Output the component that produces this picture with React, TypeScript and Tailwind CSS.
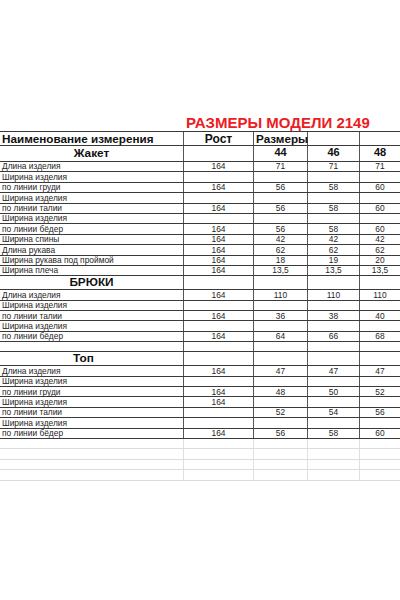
import React from "react";

type R = [string, string, string, string, string];

const jacket: R[] = [
  ["Длина изделия", "164", "71", "71", "71"],
  ["Ширина изделия", "", "", "", ""],
  ["по линии груди", "164", "56", "58", "60"],
  ["Ширина изделия", "", "", "", ""],
  ["по линии талии", "164", "56", "58", "60"],
  ["Ширина изделия", "", "", "", ""],
  ["по линии бёдер", "164", "56", "58", "60"],
  ["Ширина спины", "164", "42", "42", "42"],
  ["Длина рукава", "164", "62", "62", "62"],
  ["Ширина рукава под проймой", "164", "18", "19", "20"],
  ["Ширина плеча", "164", "13,5", "13,5", "13,5"],
];

const pants: R[] = [
  ["Длина изделия", "164", "110", "110", "110"],
  ["Ширина изделия", "", "", "", ""],
  ["по линии талии", "164", "36", "38", "40"],
  ["Ширина изделия", "", "", "", ""],
  ["по линии бёдер", "164", "64", "66", "68"],
];

const top: R[] = [
  ["Длина изделия", "164", "47", "47", "47"],
  ["Ширина изделия", "", "", "", ""],
  ["по линии груди", "164", "48", "50", "52"],
  ["Ширина изделия", "164", "", "", ""],
  ["по линии талии", "", "52", "54", "56"],
  ["Ширина изделия", "", "", "", ""],
  ["по линии бёдер", "164", "56", "58", "60"],
];

const cols = "grid grid-cols-[184px_70px_54px_52px_40px]";

function DataRow({ r }: { r: R }) {
  return (
    <div className={`${cols} h-[10.4px] border-b border-[#3a3a3a] text-[8.4px] leading-none text-[#1e1e1e]`}>
      <div className="flex items-center pl-[2px] border-r border-[#555] whitespace-nowrap">{r[0]}</div>
      <div className="flex items-center justify-center border-r border-[#555]">{r[1]}</div>
      <div className="flex items-center justify-center border-r border-[#555]">{r[2]}</div>
      <div className="flex items-center justify-center border-r border-[#555]">{r[3]}</div>
      <div className="flex items-center justify-center">{r[4]}</div>
    </div>
  );
}

function SectionRow({ title, h, sizes, shift }: { title: string; h: string; sizes?: boolean; shift?: boolean }) {
  return (
    <div className={`${cols} ${h} border-b border-[#3a3a3a] font-bold text-[#111] leading-none`}>
      <div className={`flex items-center justify-center border-r border-[#555] text-[11.8px] ${shift ? "pr-[16px]" : ""}`}>{title}</div>
      <div className="border-r border-[#555]"></div>
      <div className="flex items-end justify-center pb-[3px] border-r border-[#555] text-[11px]">{sizes ? "44" : ""}</div>
      <div className="flex items-end justify-center pb-[3px] border-r border-[#555] text-[11px]">{sizes ? "46" : ""}</div>
      <div className="flex items-end justify-center pb-[3px] text-[11px]">{sizes ? "48" : ""}</div>
    </div>
  );
}

function BlankRow({ h }: { h: string }) {
  return (
    <div className={`${cols} ${h} border-b border-[#3a3a3a]`}>
      <div className="border-r border-[#555]"></div>
      <div className="border-r border-[#555]"></div>
      <div className="border-r border-[#555]"></div>
      <div className="border-r border-[#555]"></div>
      <div></div>
    </div>
  );
}

function FaintRow() {
  return (
    <div className={`${cols} h-[10.4px] border-b border-[#dcdcdc]`}>
      <div className="border-r border-[#e0e0e0]"></div>
      <div className="border-r border-[#e0e0e0]"></div>
      <div className="border-r border-[#e0e0e0]"></div>
      <div className="border-r border-[#e0e0e0]"></div>
      <div></div>
    </div>
  );
}

export default function App() {
  return (
    <div className="w-[400px] h-[600px] bg-white overflow-hidden font-['Liberation_Sans',Arial,sans-serif]">
      <div className="pt-[113px]">
        <div className="h-[18px] pl-[186px] flex items-center text-[15px] font-bold text-[#ec1c24] leading-none whitespace-nowrap">
          РАЗМЕРЫ МОДЕЛИ 2149
        </div>
        <div className="border-t border-[#3a3a3a]">
          <div className={`${cols} h-[14px] border-b border-[#3a3a3a] font-bold text-[#111] leading-none`}>
            <div className="flex items-center pl-[2px] border-r border-[#555] text-[11.7px] whitespace-nowrap">Наименование измерения</div>
            <div className="flex items-center justify-center border-r border-[#555] text-[12px]">Рост</div>
            <div className="flex items-center pl-[2px] border-r border-[#555] text-[11.7px] whitespace-nowrap">Размеры</div>
            <div className="border-r border-[#555]"></div>
            <div></div>
          </div>
          <SectionRow title="Жакет" h="h-[16px]" sizes />
          {jacket.map((r, i) => (
            <DataRow key={"j" + i} r={r} />
          ))}
          <SectionRow title="БРЮКИ" h="h-[14px]" />
          {pants.map((r, i) => (
            <DataRow key={"p" + i} r={r} />
          ))}
          <BlankRow h="h-[10px]" />
          <SectionRow title="Топ" h="h-[14px]" shift />
          {top.map((r, i) => (
            <DataRow key={"t" + i} r={r} />
          ))}
          <FaintRow />
          <FaintRow />
          <FaintRow />
          <FaintRow />
        </div>
      </div>
    </div>
  );
}
